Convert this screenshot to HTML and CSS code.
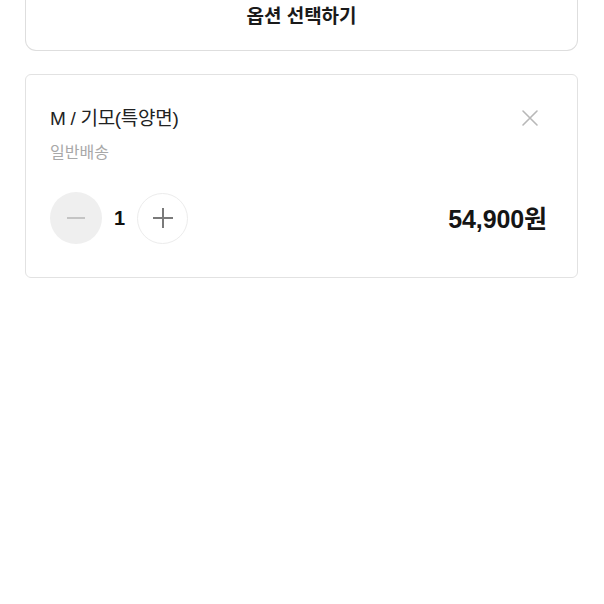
FILE: index.html
```html
<!DOCTYPE html>
<html lang="ko">
<head>
<meta charset="utf-8">
<link rel="stylesheet" href="styles.css">
</head>
<body>
<div class="page">
  <button class="select-btn">옵션 선택하기</button>
  <div class="card">
    <div class="card-head">
      <div class="info">
        <div class="title">M / 기모(특양면)</div>
        <div class="ship">일반배송</div>
      </div>
      <button class="close" aria-label="삭제">
        <svg width="18" height="18" viewBox="0 0 18 18"><path d="M2 2L16 16M16 2L2 16" stroke="#b8b8b8" stroke-width="1.6" fill="none" stroke-linecap="round"/></svg>
      </button>
    </div>
    <div class="card-foot">
      <div class="qty">
        <button class="qbtn minus" aria-label="감소">
          <svg width="20" height="20" viewBox="0 0 20 20"><path d="M1 10H19" stroke="#c4c4c4" stroke-width="2"/></svg>
        </button>
        <span class="count">1</span>
        <button class="qbtn plus" aria-label="증가">
          <svg width="22" height="22" viewBox="0 0 22 22"><path d="M1 11H21M11 1V21" stroke="#7a7a7a" stroke-width="2"/></svg>
        </button>
      </div>
      <div class="price">54,900원</div>
    </div>
  </div>
</div>
</body>
</html>
```

FILE: styles.css
```css
* { box-sizing: border-box; }
html, body { margin: 0; padding: 0; background: #fff; }
body {
  font-family: "Liberation Sans", "Noto Sans CJK KR", sans-serif;
  color: #222;
}
.page {
  padding: 0 26px 0 25px;
  display: flex;
  flex-direction: column;
  gap: 23px;
}
.select-btn {
  font-family: inherit;
  display: block;
  width: 100%;
  height: 51px;
  background: #fff;
  border: 1px solid #dedede;
  border-top: none;
  border-radius: 0 0 11px 11px;
  font-size: 19px;
  font-weight: 700;
  color: #1a1a1a;
  padding: 0 0 18px;
  line-height: 33px;
}
.card {
  border: 1px solid #e2e2e2;
  border-radius: 6px;
  padding: 29px 30px 33px 24px;
  height: 204px;
  display: flex;
  flex-direction: column;
  justify-content: space-between;
}
.card-head {
  display: flex;
  justify-content: space-between;
  align-items: flex-start;
}
.title {
  font-size: 19px;
  line-height: 30px;
  color: #222;
  letter-spacing: -0.3px;
}
.ship {
  font-size: 16px;
  line-height: 24px;
  margin-top: 7px;
  color: #a8a8a8;
}
.close {
  border: none;
  background: none;
  padding: 0;
  margin: 5px 8px 0 0;
  width: 18px;
  height: 18px;
  display: flex;
}
.card-foot {
  display: flex;
  justify-content: space-between;
  align-items: center;
}
.qty {
  display: flex;
  align-items: center;
}
.qbtn {
  border-radius: 50%;
  display: flex;
  align-items: center;
  justify-content: center;
  padding: 0;
}
.minus {
  width: 52px;
  height: 52px;
  background: #efefef;
  border: none;
}
.plus {
  width: 51px;
  height: 51px;
  background: #fff;
  border: 1px solid #ececec;
}
.count {
  width: 35px;
  text-align: center;
  font-size: 20px;
  font-weight: 700;
  color: #111;
}
.price {
  font-size: 25px;
  font-weight: 700;
  color: #151515;
  letter-spacing: -0.1px;
  margin-top: -2px;
}
```
